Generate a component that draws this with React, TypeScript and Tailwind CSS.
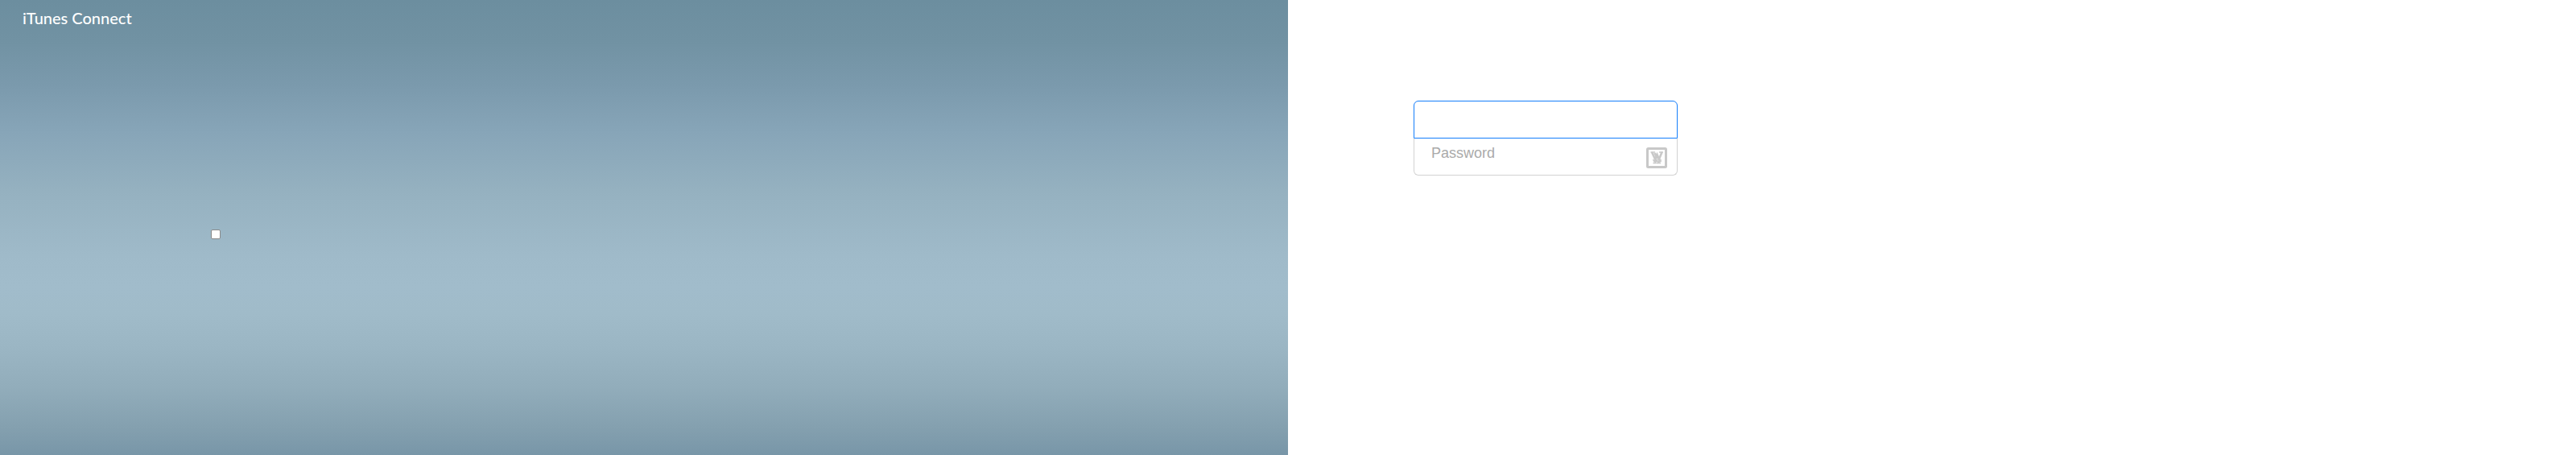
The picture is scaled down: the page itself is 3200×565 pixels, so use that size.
export default function App() {
  return (
    <div className="flex min-h-screen bg-white font-['Liberation_Sans',Arial,sans-serif]">
      <section className="min-h-screen w-1/2 bg-[linear-gradient(to_bottom,#6c8e9f_0%,#7192a3_9%,#7b9aad_19%,#87a5b8_29%,#95b1c0_42%,#9fbac9_56%,#a1bccb_63%,#a0bbc9_69%,#9bb6c4_76%,#92adbb_85%,#84a0af_94%,#7896a8_100%)] px-7">
        <h1 className="pt-1.5 font-['Lato','Noto_Sans',sans-serif] text-xl leading-8 font-medium text-white">
          iTunes Connect
        </h1>
        <div className="flex pt-[247px] pl-[234px]">
          <input
            type="checkbox"
            aria-label="Remember me"
            className="size-3 appearance-none rounded-xs border border-[#8a8a8a] bg-white"
          />
        </div>
      </section>
      <main className="w-1/2 pt-[125px] pl-39">
        <form className="w-82">
          <input
            type="text"
            aria-label="Apple ID"
            className="block h-[47px] w-full rounded-t-md border border-[#147efb] bg-white px-5 text-lg outline-none"
          />
          <div className="flex h-[46px] items-start justify-between rounded-b-md border border-t-0 border-[#d2d2d2] bg-white pr-3 pl-[21px]">
            <input
              type="password"
              aria-label="Password"
              placeholder="Password"
              className="mt-1 h-7 min-w-0 flex-1 bg-transparent text-lg text-[#333333] outline-none placeholder:text-[#aaaaaa]"
            />
            <button type="button" aria-label="Sign in" className="mt-[11px] size-[26px]">
              <svg viewBox="0 0 26 26" className="size-full" fill="none">
                <rect x="1.5" y="1.5" width="23" height="23" rx="1" stroke="#c8c8c8" strokeWidth="3" />
                <path d="M5.5 6H11M16 6H21" stroke="#c8c8c8" strokeWidth="1.5" />
                <path d="M7 6L11 14.5L13.5 9L16 14.5L19.5 6M10.5 7L14 14" stroke="#c8c8c8" strokeWidth="2.6" />
                <path d="M8.5 15L10 17.5L11.5 15V19.5H8.5M15 15.5H13V17.5H15V19.5H12.5M18 19.5H16V15.5H18V17.5H16" stroke="#c8c8c8" strokeWidth="1.5" />
              </svg>
            </button>
          </div>
        </form>
      </main>
    </div>
  );
}
